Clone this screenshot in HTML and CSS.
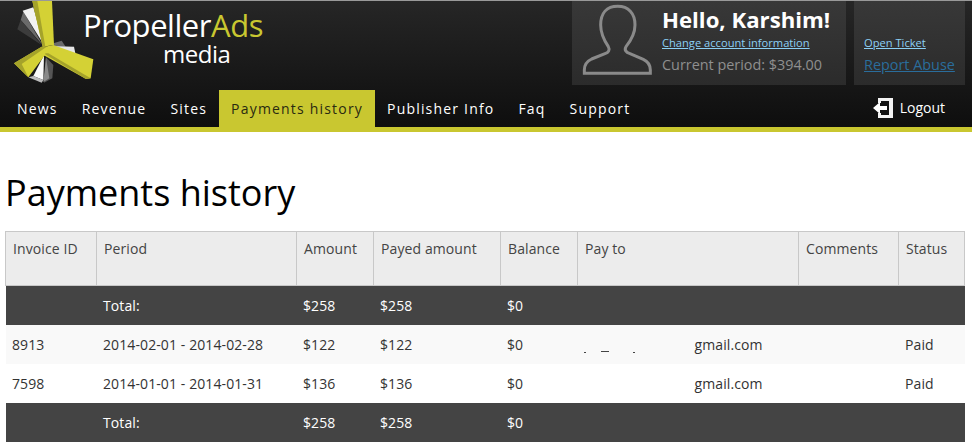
FILE: index.html
```html
<!DOCTYPE html>
<html lang="en">
<head>
<meta charset="utf-8">
<title>Payments history</title>
<link rel="stylesheet" href="styles.css">
</head>
<body>
<header class="header">
  <div class="top">
    <a class="brand">
      <svg class="logo" width="100" height="89" viewBox="0 3 300 267">
        <polygon points="62,60 70,35 128,135" fill="#6a6a6a"/>
        <polygon points="52,88 62,60 125,135" fill="#3c3c3c"/>
        <polygon points="68,32 100,22 132,135" fill="#f2f2f2"/>
        <polygon points="160,130 185,122 197,140 160,140" fill="#6a6a6a"/>
        <polygon points="150,138 222,140 226,160 160,162" fill="#e6e6e6"/>
        <polygon points="138,172 160,195 157,235 132,248" fill="#555"/>
        <polygon points="138,172 148,235 130,246" fill="#8a8a8a"/>
        <polygon points="132,165 130,240 100,228" fill="#fafafa"/>
        <polygon points="85,232 100,228 130,240 125,248" fill="#bdbdbd"/>
        <polygon points="97,3 156,3 162,135 128,140" fill="#d4d135"/>
        <polygon points="97,3 112,3 136,140 128,140" fill="#a5a32a"/>
        <polygon points="135,140 160,135 280,178 272,235 258,237 130,165" fill="#d4d135"/>
        <polygon points="130,160 258,237 272,235 145,160" fill="#a5a32a"/>
        <polygon points="42,190 125,140 140,140 135,165 85,232" fill="#d4d135"/>
        <polygon points="42,190 125,140 140,140 65,192 85,232" fill="#a5a32a"/>
      </svg>
      <div class="wordmark">
        <div class="wordmark-main">Propeller<span class="ads">Ads</span></div>
        <div class="wordmark-sub">media</div>
      </div>
    </a>
    <div class="panels">
      <div class="panel panel-user">
        <svg class="avatar" width="83" height="80" viewBox="0 3 249 240">
          <path d="M128 19C95 19 77 40 77 75C77 105 90 125 100 140C106 150 100 157 90 161L50 177C35 184 28 195 28 210L28 220L226 220L226 210C226 195 218 184 205 178L165 161C153 157 147 150 153 140C165 125 180 105 180 75C180 40 160 19 128 19Z" fill="none" stroke="#8a8a8a" stroke-width="9"/>
        </svg>
        <div class="user-text">
          <div class="hello">Hello, Karshim!</div>
          <a class="link-small">Change account information</a>
          <div class="period">Current period: $394.00</div>
        </div>
      </div>
      <div class="panel panel-links">
        <a class="link-small">Open Ticket</a>
        <a class="link-abuse">Report Abuse</a>
      </div>
    </div>
  </div>
  <nav class="nav">
    <a class="nav-item">News</a>
    <a class="nav-item">Revenue</a>
    <a class="nav-item">Sites</a>
    <a class="nav-item nav-active">Payments history</a>
    <a class="nav-item">Publisher Info</a>
    <a class="nav-item">Faq</a>
    <a class="nav-item">Support</a>
    <a class="logout">
      <svg class="logout-icon" width="20" height="20" viewBox="0 0 20 20"><path d="M5 0H20V20H5V15H8V17H16V3H8V5H5Z" fill="#f2f2f2"/><path d="M0 10L7 4V8H14V12H7V16Z" fill="#fff"/></svg>
      Logout
    </a>
  </nav>
</header>
<main class="main">
  <h1 class="title">Payments history</h1>
  <table class="table">
    <colgroup>
      <col class="c1"><col class="c2"><col class="c3"><col class="c4"><col class="c5"><col class="c6"><col class="c7"><col class="c8">
    </colgroup>
    <thead>
      <tr><th>Invoice ID</th><th>Period</th><th>Amount</th><th>Payed amount</th><th>Balance</th><th>Pay to</th><th>Comments</th><th>Status</th></tr>
    </thead>
    <tbody>
      <tr class="total"><td></td><td>Total:</td><td>$258</td><td>$258</td><td>$0</td><td></td><td></td><td></td></tr>
      <tr class="odd"><td>8913</td><td>2014-02-01 - 2014-02-28</td><td>$122</td><td>$122</td><td>$0</td><td><span class="blots"><i class="blot b1"></i><i class="blot b2"></i><i class="blot b3"></i></span>gmail.com</td><td></td><td>Paid</td></tr>
      <tr><td>7598</td><td>2014-01-01 - 2014-01-31</td><td>$136</td><td>$136</td><td>$0</td><td><span class="blots"></span>gmail.com</td><td></td><td>Paid</td></tr>
      <tr class="total"><td></td><td>Total:</td><td>$258</td><td>$258</td><td>$0</td><td></td><td></td><td></td></tr>
    </tbody>
  </table>
</main>
</body>
</html>
```
FILE: styles.css
```css
* { box-sizing: border-box; }
html, body { margin: 0; padding: 0; }
body { background: #fff; font-family: "Open Sans", sans-serif; color: #000; overflow: hidden; height: 448px; }
a { cursor: pointer; }

.header {
  height: 132px;
  border-top: 1px solid #999;
  border-bottom: 5px solid #c9c730;
  background: linear-gradient(#262626, #0e0e0e);
  display: flex;
  flex-direction: column;
}
.top { height: 89px; display: flex; justify-content: space-between; }
.brand { display: flex; }
.logo { flex: none; }
.wordmark { margin-left: -17px; padding-top: 7px; width: 190px; }
.wordmark-main { font-size: 31px; line-height: 34px; color: #fff; letter-spacing: -0.45px; white-space: nowrap; }
.ads { color: #c9c730; }
.wordmark-sub { font-size: 24px; line-height: 24px; color: #fff; padding-left: 80px; letter-spacing: -0.5px; }

.panels { display: flex; gap: 8px; padding-right: 7px; }
.panel { height: 84px; background: linear-gradient(#383838, #2b2b2b); }
.panel-user { width: 274px; display: flex; padding: 0 0 0 3px; }
.avatar { flex: none; margin-right: 4px; }
.user-text { display: flex; flex-direction: column; align-items: flex-start; padding-top: 3px; }
.hello { font-size: 22.200px; font-weight: 700; line-height: 31px; color: #fff; }
.link-small { font-size: 11.150px; line-height: 16px; color: #8cd0f5; text-decoration: underline; }
.period { font-size: 14.400px; line-height: 27px; color: #8f8f8f; }
.panel-links { width: 111px; display: flex; flex-direction: column; align-items: flex-start; padding: 34px 0 0 10px; }
.link-abuse { font-size: 14.400px; line-height: 27px; color: #2a6d9c; text-decoration: underline; }

.nav { flex: 1; display: flex; padding-left: 5px; }
.nav-item { display: block; padding: 0 12px; font-size: 14px; line-height: 37px; color: #fff; letter-spacing: 1.190px; white-space: nowrap; }
.nav-active { background: #c9c730; color: #2a2a10; }
.logout { margin-left: auto; margin-right: 27px; display: flex; align-items: center; gap: 7px; color: #fff; font-size: 14px; height: 35px; }

.main { padding: 0 7px 0 5px; }
.title { margin: 0; font-size: 36px; font-weight: 400; line-height: 48px; height: 99px; padding-top: 37px; color: #000; }
.table { border-collapse: collapse; table-layout: fixed; width: 959px; font-size: 14px; color: #333; }
.c1 { width: 91px; } .c2 { width: 200px; } .c3 { width: 77px; } .c4 { width: 127px; }
.c5 { width: 77px; } .c6 { width: 221px; } .c7 { width: 100px; } .c8 { width: 66px; }
th { height: 54px; padding: 7px 6px 0 7px; vertical-align: top; text-align: left; font-weight: 400; line-height: 19px; letter-spacing: 0.1px; background: #ececec; border: 1px solid #c8c8c8; color: #444; white-space: nowrap; }
td { height: 39px; padding: 0 6px 0 6.500px; line-height: 19px; letter-spacing: 0.1px; white-space: nowrap; }
.total td { background: #444; color: #fff; }
.odd td { background: #f9f9f9; }
.blots { display: inline-block; width: 110.500px; height: 19px; vertical-align: top; }
.blot { display: inline-block; height: 1px; background: #444; vertical-align: top; margin-top: 17px; }
.b1 { width: 2px; }
.b2 { width: 8px; margin-left: 15px; margin-top: 16px; }
.b3 { width: 2px; margin-left: 24px; }
```
